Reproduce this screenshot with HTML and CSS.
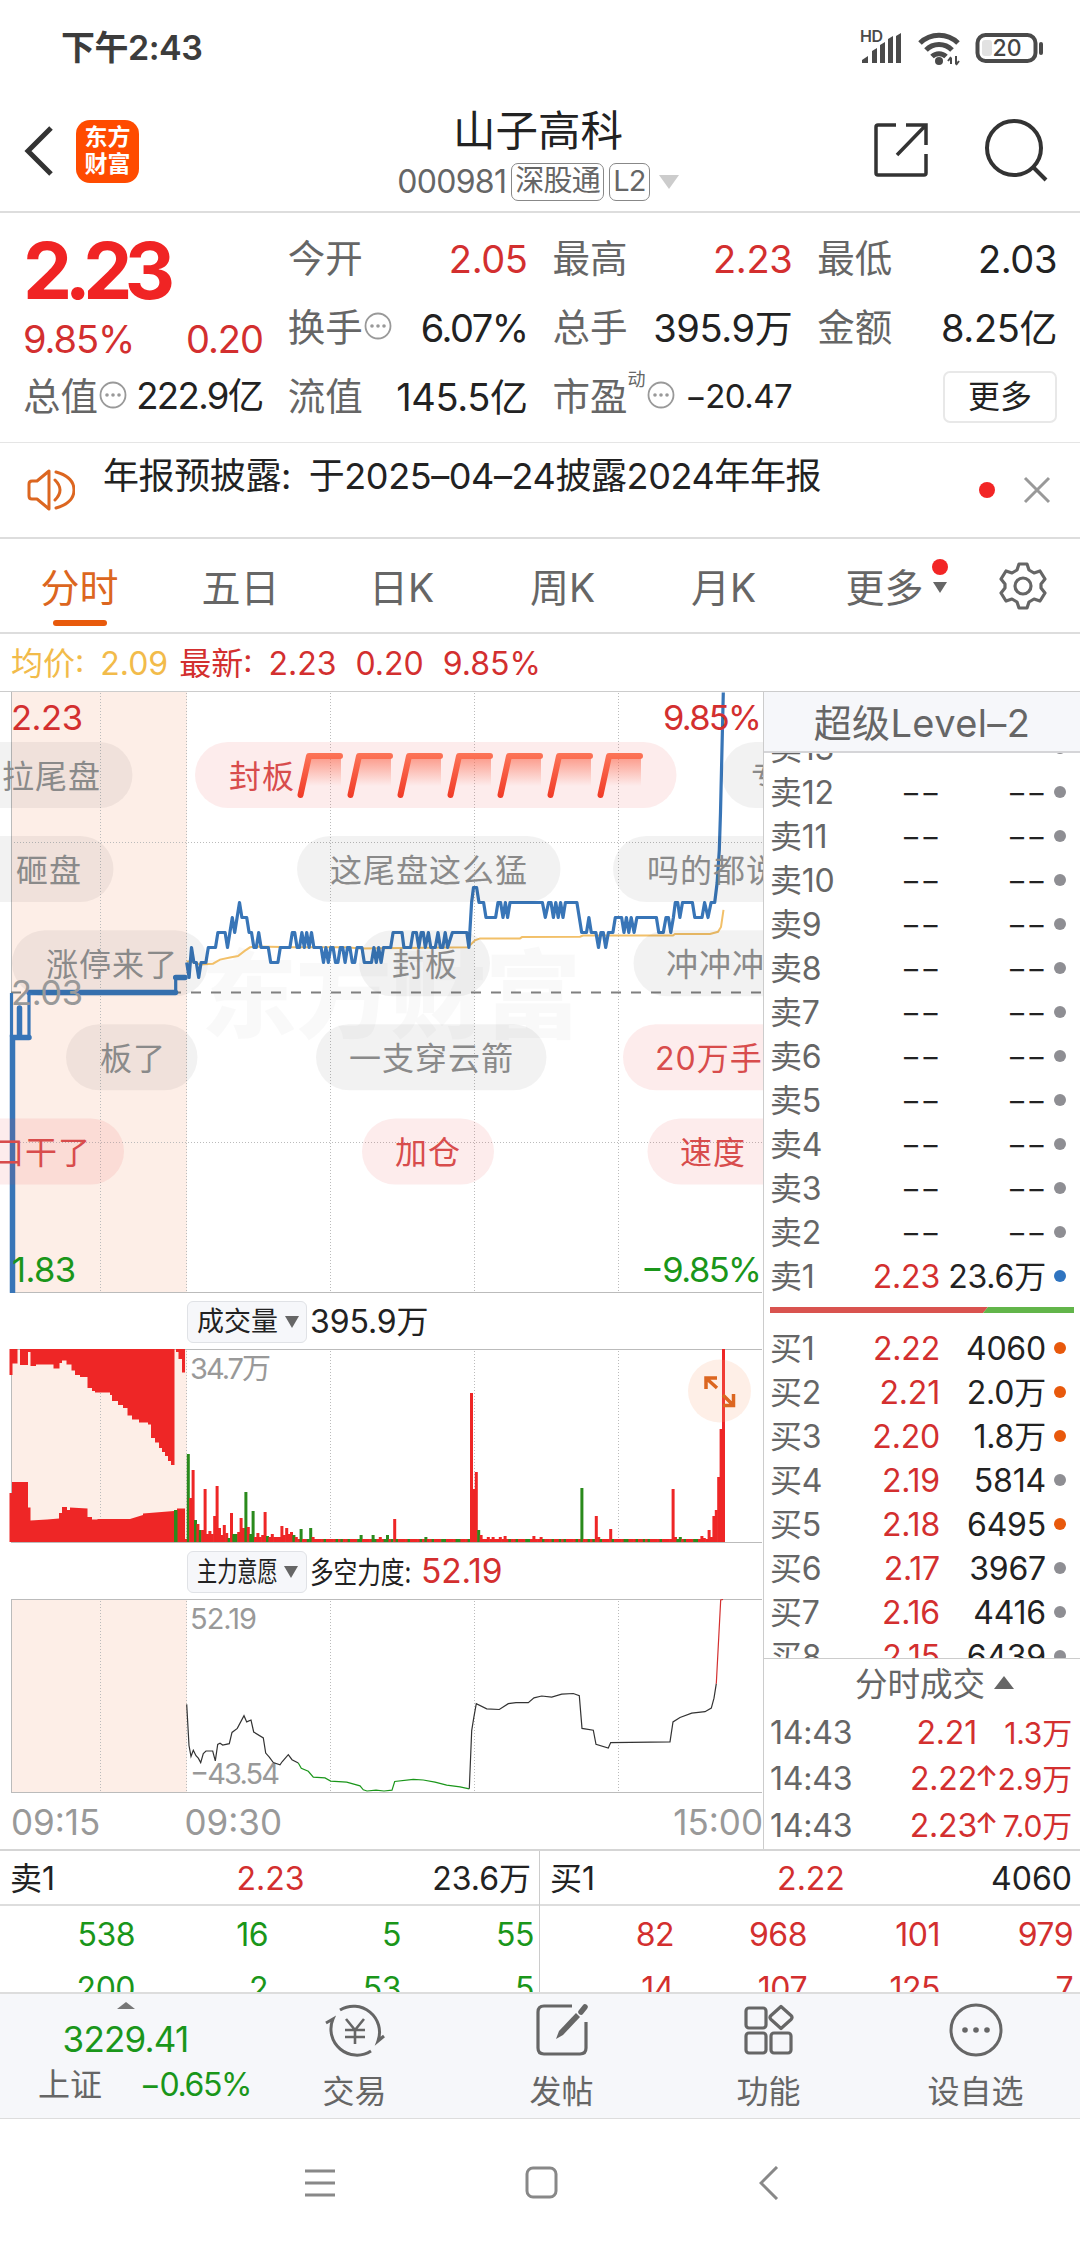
FILE: index.html
```html
<!DOCTYPE html>
<html lang="zh-CN">
<head>
  <meta charset="UTF-8">
  <meta name="viewport" content="width=device-width, initial-scale=1.0">
  <title>山子高科 000981</title>
  <link rel="stylesheet" href="styles.css">
</head>
<body>
  <div class="statusbar">
    <span class="clock">下午2:43</span>
    <svg class="status-icons" width="188" height="46" viewBox="0 -6 188 46">
      <text x="0" y="10" class="hd" textLength="23">HD</text>
      <path d="M2 30v-3l6-4v7zM12 30V18l5-3v15zM20 30V12l5-3v21zM28 30V6l5-3v27zM36 30V3l5-3v30z" fill="#4a4a4a" transform="translate(0 1)"/>
      <g fill="none" stroke="#4a4a4a" stroke-width="5">
        <path d="M60 11a27 27 0 0 1 38 0"/>
        <path d="M66 18a18 18 0 0 1 26 0"/>
        <path d="M72 24.500a10 10 0 0 1 14 0"/>
      </g>
      <circle cx="79" cy="29" r="4" fill="#4a4a4a"/>
      <path d="M91 32v-6m0-1l-3 4M96 24v8m0 1l3-4" stroke="#4a4a4a" stroke-width="2" fill="none"/>
      <rect x="117.500" y="3" width="58" height="26" rx="8" fill="none" stroke="#4a4a4a" stroke-width="4"/>
      <rect x="122" y="8" width="10" height="16" rx="3" fill="#e2e2e2"/>
      <path d="M181 12v9" stroke="#4a4a4a" stroke-width="4" stroke-linecap="round"/>
      <text x="147" y="24" class="battery">20</text>
    </svg>
  </div>

  <header class="header">
    <div class="header-left">
      <svg width="30" height="52" viewBox="0 0 30 52"><path d="M27 3L4 26l23 23" fill="none" stroke="#333" stroke-width="5"/></svg>
      <div class="logo"><span>东方</span><span>财富</span></div>
    </div>
    <div class="header-title">
      <h1>山子高科</h1>
      <div class="code">
        <span>000981</span><span class="tag">深股通</span><span class="tag">L2</span>
        <svg width="20" height="14" viewBox="0 0 20 14"><path d="M0 0h20L10 14z" fill="#ccc"/></svg>
      </div>
    </div>
    <div class="header-right">
      <svg width="56" height="56" viewBox="0 0 56 56" fill="none" stroke="#333" stroke-width="3.500">
        <path d="M23 3H5q-2 0-2 2v46q0 2 2 2h46q2 0 2-2V32M33 3h20v20M53 3L24 33"/>
      </svg>
      <svg width="66" height="66" viewBox="0 0 66 66" fill="none" stroke="#333" stroke-width="4">
        <circle cx="31" cy="31" r="27"/><path d="M50 50l13 13"/>
      </svg>
    </div>
  </header>

  <section class="stats">
    <div class="stats-col">
      <div class="price">2.23</div>
      <div class="change"><span>9.85%</span><span>0.20</span></div>
      <div class="stat"><label>总值</label><svg class="info"><use href="#info"/></svg><b class="tight">222.9亿</b></div>
    </div>
    <div class="stats-col">
      <div class="stat"><label>今开</label><b class="red">2.05</b></div>
      <div class="stat"><label>换手</label><svg class="info"><use href="#info"/></svg><b class="pct">6.07%</b></div>
      <div class="stat"><label>流值</label><b>145.5亿</b></div>
    </div>
    <div class="stats-col">
      <div class="stat"><label>最高</label><b class="red">2.23</b></div>
      <div class="stat"><label>总手</label><b>395.9万</b></div>
      <div class="stat"><label>市盈<sup>动</sup></label><svg class="info"><use href="#info"/></svg><b class="small">−20.47</b></div>
    </div>
    <div class="stats-col">
      <div class="stat"><label>最低</label><b>2.03</b></div>
      <div class="stat"><label>金额</label><b>8.25亿</b></div>
      <div class="stat"><button class="more">更多</button></div>
    </div>
  </section>
  <svg class="defs" width="0" height="0">
    <symbol id="info" viewBox="0 0 28 28">
      <circle cx="14" cy="14" r="12.500" fill="none" stroke="#999" stroke-width="1.800"/>
      <g fill="#999"><circle cx="8" cy="14" r="1.800"/><circle cx="14" cy="14" r="1.800"/><circle cx="20" cy="14" r="1.800"/></g>
    </symbol>
  </svg>

  <section class="notice">
    <svg width="48" height="44" viewBox="0 0 48 44" fill="none" stroke="#dc6620" stroke-width="3" stroke-linejoin="round">
      <path d="M22 3v38L10 31H5q-3 0-3-3V16q0-3 3-3h5z"/>
      <path d="M28 12q10 10 0 20M29 4q18 5 18 18T29 40" stroke-linecap="round"/>
    </svg>
    <p>年报预披露: 于2025–04–24披露2024年年报</p>
    <i class="dot"></i>
    <svg width="28" height="28" viewBox="0 0 28 28"><path d="M2 2l24 24M26 2L2 26" stroke="#999" stroke-width="3"/></svg>
  </section>

  <nav class="tabs">
    <span class="tab active">分时</span>
    <span class="tab">五日</span>
    <span class="tab">日K</span>
    <span class="tab">周K</span>
    <span class="tab">月K</span>
    <span class="tab">更多<i class="badge"></i><i class="caret"></i></span>
    <svg class="gear" width="50" height="50" viewBox="0 0 50 50" fill="none" stroke="#666" stroke-width="3.200" stroke-linejoin="round">
      <path d="M21 3h8l2 6 5 3 6-2 5 8-4 5v4l4 5-5 8-6-2-5 3-2 6h-8l-2-6-5-3-6 2-5-8 4-5v-4l-4-5 5-8 6 2 5-3z"/>
      <circle cx="25" cy="25" r="8"/>
    </svg>
  </nav>

  <div class="legend">
    <span class="avg">均价: 2.09</span><span>最新: 2.23</span><span>0.20</span><span>9.85%</span>
  </div>

  <main class="main">
    <div class="charts">
      <svg id="priceChart" width="763" height="601" viewBox="0 0 763 601">
        <defs>
          <linearGradient id="fade" x1="0" y1="0" x2="0" y2="1">
            <stop offset="0" stop-color="#fb6a50" stop-opacity=".65"/>
            <stop offset="1" stop-color="#fb6a50" stop-opacity="0"/>
          </linearGradient>
          <linearGradient id="flagStroke" gradientUnits="userSpaceOnUse" x1="0" y1="0" x2="0" y2="44">
            <stop offset="0" stop-color="#fc7356"/>
            <stop offset="1" stop-color="#f03a26"/>
          </linearGradient>
          <g id="flag">
            <path d="M9 2h33v30H1z" fill="url(#fade)"/>
            <path d="M1.500 41L10 2h31" fill="none" stroke="url(#flagStroke)" stroke-width="6" stroke-linecap="round" stroke-linejoin="round"/>
          </g>
        </defs>
        <rect x="12" y="0" width="175" height="600" class="auction"/>
        <path class="grid" d="M100.500 1V600M186.500 1V600M330.500 1V600M474.500 1V600M618.500 1V600M14 150.500H762M14 450.500H762"/>
        <path class="frame" d="M11.500 0V600.500H762"/>
        <text x="201" y="338" class="watermark" textLength="380">东方财富</text>
        <path class="mid" d="M11 300.500H762"/>
        <g id="series"></g>
        <g id="bullets"></g>
        <g id="flags"></g>
        <g class="axis">
          <text x="11" y="38" class="up" textLength="72">2.23</text>
          <text x="11" y="313" class="flat" textLength="72">2.03</text>
          <text x="12" y="590" class="down" textLength="64">1.83</text>
          <text x="663" y="38" class="up" textLength="99">9.85%</text>
          <text x="641" y="590" class="down" textLength="121">−9.85%</text>
        </g>
      </svg>
      <div class="sub-head">
        <span class="select">成交量<i></i></span><span class="sub-value">395.9万</span>
      </div>
      <svg id="volumeChart" width="763" height="194" viewBox="0 0 763 194">
        <rect x="12" y="0" width="175" height="193" class="auction"/>
        <path class="grid" d="M100.500 2V193M186.500 2V193M330.500 2V193M474.500 2V193M618.500 2V193"/>
        <path class="frame" d="M11.500 0V193M11 .5H762M11 193.500H762"/>
        <!-- call auction: unmatched on top, matched below -->
        <path class="bar-up" d="M9.500 0V26H12.500V14.500H17.500V0H20V16H28V3H30.500V17H36V15.500H53.500V19.500H59.500V14H62V11.500H66.500V15.500H71.500V21.500H75V26H80V28H87.500V39H92V42H95V43.500H110V46H112V52H118V56H123V59H127.500V66.500H132V70.500H139V73.500H148V75.500H151V89H155V93.500H159V99H162V103H165V107H168V112H171V116H174.500V0H176V3H178.500V10H182V23.500H185V0Z"/>
        <path class="bar-up" d="M9.500 193V144H12V133H28V158.500H30.500V171.500L47 170.500 59 169.500V164H62V158H67V161H70V158.500L87.500 159.500V168H92V170.500H97.500V170H130L143 166V164.500L174 162H177V159.500H185V193Z"/>
        <rect x="174" y="161" width="3.500" height="32" class="bar-down"/>
        <g id="bars"></g>
        <text x="190" y="30" class="axis-small" textLength="81">34.7万</text>
        <circle cx="719.500" cy="42" r="31.500" fill="#f9a878" fill-opacity=".18"/>
        <path d="M706 40V29H717M706.500 29.500L717 39M723 56.500H733.500V45M733 56L723 46" fill="none" stroke="#dc6620" stroke-width="3.500"/>
      </svg>
      <div class="sub-head">
        <span class="select narrow"><em>主力意愿</em><i></i></span><span class="sub-value narrow"><em>多空力度:</em> <b>52.19</b></span>
      </div>
      <svg width="763" height="194" viewBox="0 0 763 194">
        <rect x="12" y="0" width="175" height="193" class="auction"/>
        <path class="grid" d="M100.500 2V193M186.500 2V193M330.500 2V193M474.500 2V193M618.500 2V193"/>
        <path class="frame" d="M11.500 0V193M11 .5H762M11 193.500H762"/>
        <text x="190" y="30" class="axis-small" textLength="67">52.19</text>
        <text x="190" y="185" class="axis-small" textLength="90">−43.54</text>
        <polyline class="power" points="186.700,105.400 189,146.500 191,157.400 193.300,151.200 196,156.700 198.300,159.200 200.700,163.600 203.300,154.500 206,152 212.700,152 215.300,161.800 217.700,145.400 220,144.300 222.700,146 229.300,144.700 232,133.400 237.300,129.400 244,116.700 246.700,122.900 251,121 253.700,133 263.300,138.900 265.700,154.100 269.300,158.100 273.300,163.600 280,165.800 282.300,162.500 288.300,155.600 292,160.700 298.300,164"/>
        <polyline class="power power-down" points="298.300,164 301.300,169.400 308.300,172.300 313.300,178.100 325,178.900 330.700,182.100 346.700,183.200 360,186.900 363.300,190.800 367,192 376,191.200 384,192 392,191.200 394.700,182.500 413.300,180.300 423.300,181 435,183.200 446.700,186.100 460,187.900 469.300,189.800"/>
        <polyline class="power" points="469.300,189.800 471.700,131.600 473.700,119.200 476.300,104.700 486.700,109.800 499.300,110.500 508.300,104.700 516,103.600 528.300,103.600 534,98.900 541.700,97 551.700,98.100 561.700,95.200 573.300,94.500 579.300,96.700 582,129.400 593.300,131.200 596,145.400 608.300,149 610.700,143.600 670,142.900 673,122.900 680,118.500 691.700,114.100 705,112.700 711.300,109.100 714,99.200 716.300,84.700"/>
        <polyline class="power power-up" points="716.300,84.700 720.700,1 723,.5"/>
      </svg>
      <div class="times"><span>09:15</span><span class="open">09:30</span><span class="close">15:00</span></div>
    </div>

    <aside class="book">
      <h2>超级Level–2</h2>
      <div class="sells" id="sells"></div>
      <div class="ratio"><i class="ratio-sell"></i><i class="ratio-buy"></i></div>
      <div class="buys" id="buys"></div>
      <div class="ticks">
        <h3>分时成交<i></i></h3>
        <div class="tick"><span>14:43</span><b>2.21</b><em></em><b class="vol">1.3万</b></div>
        <div class="tick"><span>14:43</span><b>2.22</b><em>↑</em><b class="vol">2.9万</b></div>
        <div class="tick"><span>14:43</span><b>2.23</b><em>↑</em><b class="vol">7.0万</b></div>
      </div>
    </aside>
  </main>

  <section class="queue">
    <div class="queue-side sell">
      <div class="queue-head"><span>卖1</span><b>2.23</b><span>23.6万</span></div>
      <div class="queue-rows">
        <span>538</span><span>16</span><span>5</span><span>55</span>
        <span>200</span><span>2</span><span>53</span><span>5</span>
      </div>
    </div>
    <div class="queue-side buy">
      <div class="queue-head"><span>买1</span><b>2.22</b><span>4060</span></div>
      <div class="queue-rows">
        <span>82</span><span>968</span><span>101</span><span>979</span>
        <span>14</span><span>107</span><span>125</span><span>7</span>
      </div>
    </div>
  </section>

  <footer class="toolbar">
    <div class="index">
      <svg width="18" height="7" viewBox="0 0 18 7"><path d="M0 7L9 0l9 7z" fill="#777"/></svg>
      <div class="index-value">3229.41</div>
      <div class="index-row"><span>上证</span><b>−0.65%</b></div>
    </div>
    <div class="tool">
      <svg width="62" height="56" viewBox="0 0 62 56" fill="none" stroke="#666" stroke-width="3">
        <path d="M16 8A26 26 0 0 1 54 39l6-5M2 21l7-4A26 26 0 0 0 47 49"/>
        <path d="M22 17l9 11 9-11M31 28v14M21 28h20M21 35h20" stroke-width="2.600"/>
      </svg>
      <span>交易</span>
    </div>
    <div class="tool">
      <svg width="56" height="56" viewBox="0 0 56 56" fill="none" stroke="#666" stroke-width="3.200">
        <path d="M38 4H10q-6 0-6 6v36q0 6 6 6h36q6 0 6-6V20"/>
        <path d="M22 37l3-8 17-18 4 4-17 18z" fill="#666" stroke="none"/>
        <path d="M47 10l4-5" stroke-width="5.500" stroke-linecap="round"/>
      </svg>
      <span>发帖</span>
    </div>
    <div class="tool">
      <svg width="52" height="56" viewBox="0 0 52 56" fill="none" stroke="#666" stroke-width="3.200">
        <rect x="3" y="6" width="20" height="20" rx="3"/><path d="M38 4.500l10 9q2 2 0 4l-10 9-10-9q-2-2 0-4z" stroke-linejoin="round"/>
        <rect x="3" y="31" width="20" height="20" rx="3"/><rect x="28" y="31" width="20" height="20" rx="3"/>
      </svg>
      <span>功能</span>
    </div>
    <div class="tool">
      <svg width="56" height="56" viewBox="0 0 56 56">
        <circle cx="28" cy="28" r="25" fill="none" stroke="#666" stroke-width="3"/>
        <g fill="#666"><circle cx="17" cy="28" r="2.800"/><circle cx="28" cy="28" r="2.800"/><circle cx="39" cy="28" r="2.800"/></g>
      </svg>
      <span>设自选</span>
    </div>
  </footer>

  <div class="sysnav">
    <svg width="30" height="34" viewBox="0 0 30 34"><path d="M0 5h30M0 17h30M0 29h30" stroke="#888" stroke-width="3"/></svg>
    <svg class="home" width="34" height="34" viewBox="0 0 34 34"><rect x="2" y="2" width="29" height="29" rx="6" fill="none" stroke="#888" stroke-width="3"/></svg>
    <svg width="20" height="34" viewBox="0 0 20 34"><path d="M18 1L2 17l16 16" fill="none" stroke="#888" stroke-width="3"/></svg>
  </div>

  <script>
    const NS = 'http://www.w3.org/2000/svg';

    function add(parent, name, attrs, text) {
      const el = document.createElementNS(NS, name);
      for (const key in attrs) el.setAttribute(key, attrs[key]);
      if (text) el.textContent = text;
      document.getElementById(parent).appendChild(el);
    }

    // one minute is 2.4px wide, one cent is 15px high
    const minuteX = m => 186.7 + m * 2.4;
    const centY = c => 300.5 - c * 15;

    // cents above the previous close, one per minute for the first 87 minutes
    const morning = '213221222333344443454565554433433332222333334433434343333232332233233223332222323233334'.split('').map((c, i) => [i, +c]);
    const later = [
      [87.5, 4], [89.7, 4], [90.5, 3], [93.3, 3], [94.3, 4], [95.7, 4], [96.7, 3], [97.7, 4], [98.6, 4], [99.4, 3],
      [100.7, 4], [101.7, 3], [103.6, 3], [104.7, 4], [105.7, 3], [106.7, 3], [107.7, 4], [108.7, 3], [110.7, 4],
      [116.7, 4], [117.6, 3], [118.7, 6], [119.5, 7], [120.8, 7], [121.8, 6], [123.7, 6], [124.7, 5], [128.7, 5],
      [129.7, 6], [130.8, 6], [131.8, 5], [132.8, 6], [133.7, 5], [134.7, 6], [135.8, 6], [148.2, 6], [149.4, 5],
      [150.8, 6], [151.8, 6], [152.8, 5], [153.8, 6], [154.8, 5], [155.8, 6], [156.8, 5], [157.8, 6], [158.8, 6],
      [159.8, 6], [162.6, 6], [163.6, 5], [164.6, 4], [166.6, 4], [167.6, 5], [168.6, 4], [170.5, 4], [171.6, 3],
      [172.6, 4], [173.6, 4], [174.6, 3], [175.7, 4], [177.6, 4], [178.6, 5], [181.2, 5], [182.2, 4], [183.2, 5],
      [184.2, 4], [185.2, 5], [186.4, 4], [187.6, 5], [195.7, 5], [196.7, 4], [198.6, 4], [199.7, 5], [200.7, 5],
      [201.7, 4], [202.8, 5], [203.6, 6], [204.6, 6], [205.5, 5], [206.6, 6], [210.7, 6], [211.7, 5], [214.7, 5],
      [215.8, 6], [217.2, 5], [218.5, 6], [220, 6], [221, 7.3], [221.9, 9.5], [222.4, 12], [223.6, 20]
    ];
    const line = morning.concat(later).map(p => minuteX(p[0]).toFixed(1) + ',' + centY(p[1])).join(' ');

    add('series', 'polyline', { class: 'avg-line', points: '186.7,269.6 191.7,269.6 200,272.5 213,271.7 220,267.6 230,265.6 238,264 245,258.6 250,255.3 257,254.5 293,255.3 347,255.3 360,256.6 468,255.3 475,248.4 480,246.4 520,246.4 522,245.1 580,244.7 583,243.5 673,243.5 675,241.9 710,241.9 718,239.8 721,235 723.5,217.8' });
    add('series', 'path', { class: 'auction-line', d: 'M12.500 600V345.500H29M19.500 316V345' });
    add('series', 'path', { class: 'price-line', d: 'M11.500 345V301M29 345V301M175.700 301V286' });
    add('series', 'path', { class: 'auction-line', d: 'M29 300.500H175.500M175.700 285.500H185' });
    add('series', 'polyline', { class: 'price-line', points: line });

    // [pill left, pill right, row, text x, text, hot]
    const bullets = [
      [-60, 132.5, 0, 2, '拉尾盘'], [195, 676.5, 0, 229, '封板', 1], [722, 860, 0, 751, '专'],
      [-60, 113.5, 1, 16, '砸盘'], [297, 560.5, 1, 330, '这尾盘这么猛'], [613, 860, 1, 647, '吗的都说'],
      [12, 208, 2, 46, '涨停来了'], [359, 490, 2, 392, '封板'], [633.5, 860, 2, 666, '冲冲冲'],
      [66, 197.5, 3, 100, '板了'], [316, 546.5, 3, 349, '一支穿云箭'], [623, 860, 3, 655, '20万手', 1],
      [-60, 124, 4, -8, '口干了', 1], [362, 494, 4, 395, '加仓', 1], [647.5, 860, 4, 680, '速度', 1]
    ];
    bullets.forEach(([x1, x2, row, tx, text, hot]) => {
      const y = 50 + row * 94.1;
      add('bullets', 'rect', { x: x1, y: y, width: x2 - x1, height: 66, rx: 33, class: hot ? 'pill hot' : 'pill' });
      add('bullets', 'text', { x: tx, y: y + 46, class: hot ? 'pill-text hot' : 'pill-text' }, text);
    });
    for (let i = 0; i < 7; i++) add('flags', 'use', { href: '#flag', x: 0, y: 0, transform: `translate(${299 + i * 50} 62)` });

    // minute: [height, 1 when falling]
    const vol = {
      1: [88, 1], 2: [44], 3: [72], 4: [22, 1], 5: [18], 6: [12, 1], 7: [12], 8: [53], 9: [8], 10: [11], 11: [8], 12: [26], 13: [56],
      14: [14], 15: [7], 16: [17], 17: [9], 18: [4, 1], 19: [29], 20: [8, 1], 21: [8, 1], 22: [10], 23: [24], 24: [14], 25: [50, 1],
      26: [15], 27: [8, 1], 28: [31, 1], 29: [5], 30: [9], 31: [5], 32: [7], 33: [30], 34: [6, 1], 35: [5], 36: [8], 37: [5], 38: [5],
      39: [5], 40: [16], 41: [7], 42: [14], 43: [8], 44: [10], 45: [7, 1], 46: [5], 48: [13, 1], 52: [14, 1], 53: [5], 73: [7, 1],
      78: [7, 1], 81: [5], 84: [7, 1], 87: [23], 100: [5, 1], 119: [149], 120: [53], 121: [70], 122: [12, 1], 123: [7], 126: [5],
      128: [5], 131: [5], 133: [6], 145: [6], 148: [5], 165: [54, 1], 171: [26], 172: [5], 177: [13], 203: [53], 204: [5], 206: [5, 1],
      215: [6], 216: [4], 218: [12], 219: [5], 220: [26], 221: [32], 222: [65], 223: [113], 224: [193]
    };
    for (let m = 0; m <= 224; m++) {
      const [h, down] = vol[m] || [3, m % 5 === 3 || m % 7 === 2];
      add('bars', 'rect', { x: (minuteX(m) - 2.3).toFixed(1), y: 193 - h, width: 3, height: h, class: down ? 'bar-down' : 'bar-up' });
    }

    function bookRows(id, rows) {
      document.getElementById(id).innerHTML = rows.map(([name, price, amount, dot]) =>
        `<div class="book-row${price ? '' : ' empty'}"><span>${name}</span><b class="red">${price || '––'}</b><b>${amount || '––'}</b><i class="${dot || ''}"></i></div>`
      ).join('');
    }
    const sells = [];
    for (let n = 13; n > 1; n--) sells.push(['卖' + n]);
    sells.push(['卖1', '2.23', '23.6万', 'blue']);
    bookRows('sells', sells);
    bookRows('buys', [
      ['买1', '2.22', '4060', 'orange'], ['买2', '2.21', '2.0万', 'orange'], ['买3', '2.20', '1.8万', 'orange'],
      ['买4', '2.19', '5814'], ['买5', '2.18', '6495', 'orange'], ['买6', '2.17', '3967'],
      ['买7', '2.16', '4416'], ['买8', '2.15', '6439']
    ]);
  </script>
</body>
</html>
```
FILE: styles.css
```css
* {
  box-sizing: border-box;
}

body {
  margin: 0;
  width: 1080px;
  height: 2248px;
  overflow: hidden;
  display: flex;
  flex-direction: column;
  background: #fff;
  color: #222;
  font-family: Inter, "Noto Sans CJK SC", sans-serif;
  font-size: 32px;
  line-height: 1;
}

h1, h2, h3, p {
  margin: 0;
  font-weight: 400;
}

b {
  font-weight: 400;
}

i, em {
  font-style: normal;
}

svg {
  display: block;
  flex: none;
}

.red {
  color: #d32f2f;
}

.defs {
  display: none;
}

/* status bar */
.statusbar {
  height: 94px;
  padding: 0 32px 0 61px;
  display: flex;
  align-items: center;
  justify-content: space-between;
}

.clock {
  padding-top: 2px;
  font-size: 34px;
  font-weight: 600;
  letter-spacing: -0.5px;
  color: #3c3c3c;
}

.status-icons {
  margin-top: 3px;
}

.hd {
  font-size: 16px;
  font-weight: 600;
  fill: #4a4a4a;
}

.battery {
  font-size: 23px;
  font-weight: 500;
  text-anchor: middle;
  fill: #444;
}

/* header */
.header {
  height: 119px;
  border-bottom: 2px solid #ddd;
  padding: 0 31px 0 24px;
  display: grid;
  grid-template-columns: 250px 1fr 250px;
}

.header-left {
  display: flex;
  align-items: center;
  gap: 22px;
  padding-bottom: 3px;
}

.logo {
  width: 63px;
  height: 63px;
  border-radius: 14px;
  background: #ff4b00;
  color: #fff;
  font-size: 23px;
  font-weight: 700;
  line-height: 27px;
  display: flex;
  flex-direction: column;
  align-items: center;
  justify-content: center;
}

.header-title {
  text-align: center;
  padding: 15px 0 0 3px;
}

.header-title h1 {
  font-size: 42.500px;
  line-height: 44px;
}

.code {
  margin-top: 10px;
  display: flex;
  align-items: center;
  justify-content: center;
  gap: 5px;
  font-size: 32px;
  letter-spacing: -0.7px;
  color: #666;
}

.tag {
  height: 38px;
  line-height: 34px;
  padding: 0 3px;
  border: 1.500px solid #888;
  border-radius: 7px;
  font-size: 29px;
}

.code svg {
  margin-left: 4px;
}

.header-right {
  display: flex;
  justify-content: flex-end;
  align-items: center;
  gap: 54px;
  padding-bottom: 5px;
}

/* quote numbers */
.stats {
  height: 230px;
  border-bottom: 1px solid #e5e5e5;
  padding: 11px 23px 0 23px;
  display: grid;
  grid-template-columns: repeat(4, 1fr);
  gap: 25px;
}

.stat {
  height: 69px;
  display: flex;
  align-items: center;
  font-size: 39px;
}

.stat label {
  color: #666;
  font-size: 37.500px;
  white-space: nowrap;
}

.stat b {
  margin-left: auto;
  font-size: 38px;
  letter-spacing: -0.4px;
  white-space: nowrap;
}

.stat .pct {
  letter-spacing: -1.500px;
}

.stat .tight {
  letter-spacing: -1.600px;
  font-size: 36.500px;
}

.stat .small {
  font-size: 33px;
  letter-spacing: -0.5px;
}

.stat sup {
  font-size: 18px;
  line-height: 0;
  vertical-align: 24px;
}

.info {
  width: 28px;
  height: 28px;
  margin: 0 0 4px 1px;
}

.price {
  height: 88px;
  line-height: 94px;
  font-size: 78px;
  font-weight: 700;
  letter-spacing: -7.500px;
  color: #f02424;
}

.change {
  height: 50px;
  line-height: 54px;
  display: flex;
  justify-content: space-between;
  font-size: 38px;
  letter-spacing: -1.100px;
  color: #d32f2f;
}

.more {
  margin-left: auto;
  width: 114px;
  height: 52px;
  padding: 0;
  border: 2px solid #e8e8e8;
  border-radius: 7px;
  background: #fff;
  color: #222;
  font: inherit;
  font-size: 32px;
}

/* notice */
.notice {
  height: 96px;
  border-bottom: 2px solid #ddd;
  padding: 0 29px 0 27px;
  display: flex;
  align-items: center;
}

.notice p {
  flex: 1;
  margin: -28px 0 0 28px;
  font-size: 36px;
  letter-spacing: -0.4px;
  word-spacing: 8px;
  white-space: nowrap;
}

.dot {
  width: 16px;
  height: 16px;
  margin-right: 28px;
  border-radius: 50%;
  background: #f22525;
}

/* period tabs */
.tabs {
  height: 95px;
  border-bottom: 2px solid #ddd;
  display: flex;
  align-items: center;
}

.tab {
  position: relative;
  width: 161px;
  height: 100%;
  padding: 3px 2px 0 0;
  display: flex;
  align-items: center;
  justify-content: center;
  font-size: 39px;
  color: #666;
}

.tab.active {
  color: #dc6620;
}

.tab.active::after {
  content: "";
  position: absolute;
  left: 53px;
  bottom: 6px;
  width: 54px;
  height: 6px;
  border-radius: 3px;
  background: #e85a0c;
}

.badge {
  position: absolute;
  left: 127px;
  top: 20px;
  width: 16px;
  height: 16px;
  border-radius: 50%;
  background: #f22525;
}

.caret {
  position: absolute;
  left: 128px;
  top: 43px;
  border: 7px solid transparent;
  border-top: 11px solid #666;
  border-bottom: 0;
}

.gear {
  margin-left: 32px;
}

.legend {
  height: 58px;
  padding: 3px 0 0 11px;
  border-bottom: 1px solid #ccc;
  display: flex;
  align-items: center;
  font-size: 32px;
  word-spacing: 7px;
  color: #d32f2f;
  white-space: nowrap;
}

.legend span {
  margin-right: 19px;
}

.legend .avg {
  margin-right: 11px;
  color: #f2bb4a;
}

/* charts */
.main {
  height: 1159px;
  border-bottom: 2px solid #d5d5d5;
  display: flex;
}

.charts {
  width: 763px;
}

.auction {
  fill: #fdeee7;
}

.grid {
  fill: none;
  stroke: #bbb;
  stroke-dasharray: 1 2;
}

.frame {
  fill: none;
  stroke: #bbb;
}

.mid {
  stroke: #808080;
  stroke-width: 2;
  stroke-dasharray: 10 10;
}

.watermark {
  font-size: 96px;
  font-weight: 900;
  fill: #000;
  fill-opacity: .025;
}

.price-line {
  fill: none;
  stroke: #3875b7;
  stroke-width: 3.200;
  stroke-linejoin: round;
}

.auction-line {
  fill: none;
  stroke: #3875b7;
  stroke-width: 5.500;
  stroke-linecap: round;
}

.avg-line {
  fill: none;
  stroke: #f2c069;
  stroke-width: 2;
}

.pill {
  fill: #000;
  fill-opacity: .05;
}

.pill.hot {
  fill: #f04040;
  fill-opacity: .1;
}

.pill-text {
  font-size: 32px;
  letter-spacing: 1px;
  fill: #8a8a8a;
}

.pill-text.hot {
  fill: #d84c4c;
}

.axis text {
  font-size: 34.500px;
}

.up {
  fill: #d32f2f;
}

.down {
  fill: #1a961a;
}

.flat {
  fill: #999;
}

.axis-small {
  font-size: 29px;
  fill: #999;
}

.bar-up {
  fill: #ee2626;
}

.bar-down {
  fill: #2a8a1c;
}

.power {
  fill: none;
  stroke: #333;
  stroke-width: 1.200;
}

.power-down {
  stroke: #1a961a;
}

.power-up {
  stroke: #d32f2f;
}

.sub-head {
  height: 56px;
  padding: 1px 0 0 187px;
  display: flex;
  align-items: center;
}

.select {
  width: 120px;
  height: 42px;
  padding-left: 9px;
  border: 1px solid #e0e2e6;
  border-radius: 6px;
  background: #f6f7fa;
  display: flex;
  align-items: center;
  font-size: 27px;
}

.select i {
  margin-left: 7px;
  border: 7px solid transparent;
  border-top: 12px solid #666;
  border-bottom: 0;
}

/* long names are squeezed to the width of the box */
.select em {
  display: inline-block;
  width: 80px;
  font-size: 28px;
  transform: scaleX(.72);
  transform-origin: left;
  white-space: nowrap;
}

.sub-value {
  margin-left: 3px;
  font-size: 32px;
  letter-spacing: -0.1px;
  color: #222;
}

.sub-value.narrow em {
  display: inline-block;
  width: 102px;
  font-size: 30px;
  transform: scaleX(.79);
  transform-origin: left;
  white-space: nowrap;
}

.sub-value.narrow b {
  color: #d32f2f;
  font-size: 33.500px;
}

.times {
  height: 57px;
  padding: 2px 0 0 11px;
  display: flex;
  align-items: center;
  font-size: 35px;
  color: #999;
}

.open {
  margin-left: 84px;
}

.close {
  margin-left: auto;
}

/* order book */
.book {
  width: 317px;
  border-left: 1px solid #ccc;
  display: flex;
  flex-direction: column;
}

.book h2 {
  flex: none;
  height: 61px;
  line-height: 62px;
  border-bottom: 2px solid #d5d5d8;
  background: #f6f7fa;
  text-align: center;
  font-size: 38px;
  letter-spacing: 0.4px;
  color: #666;
}

.sells {
  flex: none;
  height: 545px;
  overflow: hidden;
  display: flex;
  flex-direction: column;
  justify-content: flex-end;
}

.book-row {
  flex: none;
  height: 44px;
  padding: 1px 0 0 6px;
  display: grid;
  grid-template-columns: 70px 100px 106px 12px;
  align-items: center;
  text-align: right;
  font-size: 32px;
  letter-spacing: -0.2px;
  white-space: nowrap;
}

.book-row span {
  text-align: left;
  color: #666;
}

.book-row.empty b {
  color: #222;
  font-size: 28px;
  letter-spacing: 5.500px;
  margin-right: -3px;
}

.book-row i {
  width: 12px;
  height: 12px;
  margin: 0 0 2px 8px;
  border-radius: 50%;
  background: #8e8e93;
}

.book-row i.blue {
  background: #2f74c0;
}

.book-row i.orange {
  background: #e8590c;
}

.ratio {
  flex: none;
  height: 28px;
  padding: 9px 6px 13px;
  display: flex;
}

.ratio-sell {
  width: 218px;
  background: #d9534f;
  clip-path: polygon(0 0, 100% 0, calc(100% - 5px) 100%, 0 100%);
}

.ratio-buy {
  flex: 1;
  margin-left: -5px;
  background: #62b54a;
  clip-path: polygon(5px 0, 100% 0, 100% 100%, 0 100%);
}

.buys {
  flex: none;
  height: 332px;
  overflow: hidden;
}

.ticks {
  flex: 1;
  border-top: 1px solid #ccc;
  padding-left: 6px;
}

.ticks h3 {
  height: 51px;
  display: flex;
  align-items: center;
  padding: 2px 0 0 85px;
  font-size: 32.500px;
  color: #666;
}

.ticks h3 i {
  margin: -6px 0 0 9px;
  border: 10px solid transparent;
  border-bottom: 13px solid #666;
  border-top: 0;
}

.tick {
  height: 46.300px;
  display: grid;
  grid-template-columns: 100px 107px 19px 76px;
  align-items: center;
  color: #d32f2f;
  text-align: right;
  letter-spacing: -0.2px;
  white-space: nowrap;
}

.tick span {
  text-align: left;
  color: #666;
}

.tick em {
  font-weight: 500;
  font-size: 28px;
  text-align: center;
  margin: -6px -8px 0;
}

.tick .vol {
  font-size: 30px;
}

/* order queue */
.queue {
  height: 143px;
  border-bottom: 2px solid #ddd;
  display: grid;
  grid-template-columns: 1fr 1fr;
  overflow: hidden;
}

.queue-side.sell {
  border-right: 1px solid #ccc;
}

.queue-head {
  height: 55px;
  padding: 3px 8px 0 10px;
  border-bottom: 2px solid #ddd;
  display: grid;
  grid-template-columns: 150px 1fr 150px;
  align-items: center;
  text-align: center;
}

.queue-head b {
  color: #d32f2f;
}

.queue-head span:first-child {
  text-align: left;
}

.queue-head span:last-child {
  text-align: right;
}

.queue-rows {
  display: grid;
  grid-template-columns: repeat(4, 133px);
  grid-auto-rows: 54px;
  align-items: center;
  padding-top: 2px;
  text-align: right;
  letter-spacing: -0.5px;
}

.queue-side.sell .queue-rows {
  padding-left: 2px;
  color: #1a961a;
}

.queue-side.buy .queue-rows {
  padding-left: 1px;
  color: #d32f2f;
}

/* toolbar */
.toolbar {
  height: 125px;
  border-bottom: 1px solid #ddd;
  background: #f6f7fa;
  display: grid;
  grid-template-columns: 251px repeat(4, 207px);
}

.index {
  display: flex;
  flex-direction: column;
  align-items: center;
  padding-top: 8px;
  color: #1a961a;
}

.index-value {
  margin-top: 8px;
  font-size: 35px;
  line-height: 45px;
  letter-spacing: -0.8px;
}

.index-row {
  width: 100%;
  padding: 0 0 0 38px;
  display: flex;
  justify-content: space-between;
  line-height: 45px;
}

.index-row span {
  color: #666;
}

.index-row b {
  letter-spacing: -1.400px;
}

.tool {
  display: flex;
  flex-direction: column;
  align-items: center;
  padding-top: 8px;
  color: #666;
}

.tool span {
  margin-top: 18px;
}

/* android navigation */
.sysnav {
  flex: 1;
  padding: 0 301px 2px 305px;
  display: flex;
  align-items: center;
  justify-content: space-between;
}

.home {
  margin-right: 10px;
}
```
